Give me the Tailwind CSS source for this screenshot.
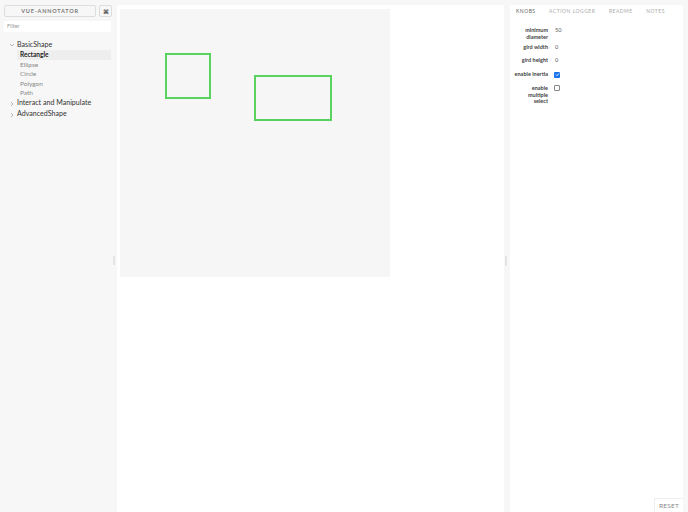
<!DOCTYPE html>
<html lang="en">
<head>
  <meta charset="UTF-8">
  <title>Vue-Annotator</title>
  <script src="https://cdn.jsdelivr.net/npm/@tailwindcss/browser@4"></script>
</head>
<body class="bg-[#f7f7f7] font-['Lato',sans-serif] overflow-hidden">
  <div class="flex h-[512px] w-[688px]">
    <!-- Sidebar -->
    <aside class="relative w-[117px] shrink-0 pt-[5px] pl-1">
      <div class="flex gap-[3px] w-[108px]">
        <div class="h-[12px] w-[93px] border border-[#ddd] rounded-[2px] flex items-center justify-center text-[5.5px] tracking-[0.8px] text-[#777] font-bold">VUE-ANNOTATOR</div>
        <div class="h-[12px] w-[13px] border border-[#ddd] rounded-[2px] flex items-center justify-center text-[6px] text-[#555] font-bold">⌘</div>
      </div>
      <div class="mt-[4px] h-[11px] w-[107px] bg-white text-[5.5px] leading-[11px] pl-[3px] text-[#999]">Filter</div>
      <ul class="mt-[8px] w-[107px] text-[7.1px] text-[#333]">
        <li class="h-[10px] flex items-center">
          <svg class="ml-[4px] mr-[1px]" width="8" height="8" viewBox="0 0 8 8"><path d="M2 3l2 2 2-2" fill="none" stroke="#999" stroke-width=".7"/></svg>
          <span>BasicShape</span>
        </li>
        <li class="ml-[13px] pl-[3px] h-[9.5px] bg-[#eee] text-[6.5px] leading-[9.5px] font-bold text-[#222]">Rectangle</li>
        <li class="ml-[13px] pl-[3px] h-[9.5px] text-[6.5px] leading-[9.5px] text-[#888]">Ellipse</li>
        <li class="ml-[13px] pl-[3px] h-[9.5px] text-[6.5px] leading-[9.5px] text-[#888]">Circle</li>
        <li class="ml-[13px] pl-[3px] h-[9.5px] text-[6.5px] leading-[9.5px] text-[#888]">Polygon</li>
        <li class="ml-[13px] pl-[3px] h-[9.5px] text-[6.5px] leading-[9.5px] text-[#888]">Path</li>
        <li class="mt-[1px] h-[10px] flex items-center">
          <svg class="ml-[4px] mr-[1px]" width="8" height="8" viewBox="0 0 8 8"><path d="M3 2l2 2-2 2" fill="none" stroke="#999" stroke-width=".7"/></svg>
          <span>Interact and Manipulate</span>
        </li>
        <li class="mt-[1px] h-[10px] flex items-center">
          <svg class="ml-[4px] mr-[1px]" width="8" height="8" viewBox="0 0 8 8"><path d="M3 2l2 2-2 2" fill="none" stroke="#999" stroke-width=".7"/></svg>
          <span>AdvancedShape</span>
        </li>
      </ul>
      <div class="absolute left-[113px] top-[256px] w-[2px] h-[9px] bg-[#e4e4e4]"></div>
    </aside>

    <!-- Preview -->
    <main class="w-[387px] shrink-0 mt-[5px] bg-white pl-[3px] pt-[4px]">
      <div class="relative w-[270px] h-[268px] bg-[#f6f6f6]">
        <div class="absolute left-[45px] top-[44px] w-[46px] h-[46px] border-2 border-[#5ad25f]"></div>
        <div class="absolute left-[134px] top-[66px] w-[78px] h-[46px] border-2 border-[#5ad25f]"></div>
      </div>
    </main>

    <!-- Divider -->
    <div class="w-[6px] shrink-0 relative">
      <div class="absolute left-[1px] top-[256px] w-[2px] h-[10px] bg-[#e4e4e4]"></div>
    </div>

    <!-- Addons -->
    <section class="relative w-[173px] shrink-0 mt-[5px] bg-white">
      <div class="flex h-[14px] items-center text-[5px] tracking-[0.5px] text-[#aaa] pl-[6px] gap-[13.5px]">
        <span class="text-[#666]">KNOBS</span><span>ACTION LOGGER</span><span>README</span><span>NOTES</span>
      </div>
      <div class="mt-[8px] text-[5.5px] leading-[6.5px] font-bold text-[#444]">
        <div class="flex h-[17px]">
          <div class="ml-[4px] w-[34px] text-right">minimum diameter</div>
          <div class="ml-[7px] font-normal text-[#555]">50</div>
        </div>
        <div class="flex h-[13px]">
          <div class="ml-[4px] w-[34px] text-right">gird width</div>
          <div class="ml-[7px] font-normal text-[#555]">0</div>
        </div>
        <div class="flex h-[14px]">
          <div class="ml-[4px] w-[34px] text-right">gird height</div>
          <div class="ml-[7px] font-normal text-[#555]">0</div>
        </div>
        <div class="flex h-[14px]">
          <div class="ml-[4px] w-[34px] text-right whitespace-nowrap">enable inertia</div>
          <div class="ml-[6px] mt-[0.5px] w-[6px] h-[6px] rounded-[1px] bg-[#1a73e8] flex items-center justify-center">
            <svg width="5" height="5" viewBox="0 0 5 5"><path d="M1 2.6l1 1 2-2.2" fill="none" stroke="#fff" stroke-width=".9"/></svg>
          </div>
        </div>
        <div class="flex">
          <div class="ml-[4px] w-[34px] text-right">enable multiple select</div>
          <div class="ml-[6px] w-[6px] h-[6px] rounded-[1px] border-[0.5px] border-[#888] bg-white"></div>
        </div>
      </div>
      <div class="absolute right-0 bottom-0 w-[29px] h-[14px] border-l border-t border-[#eee] text-[6.5px] leading-[14px] text-center tracking-[0.2px] text-[#888]">RESET</div>
    </section>
  </div>
</body>
</html>
